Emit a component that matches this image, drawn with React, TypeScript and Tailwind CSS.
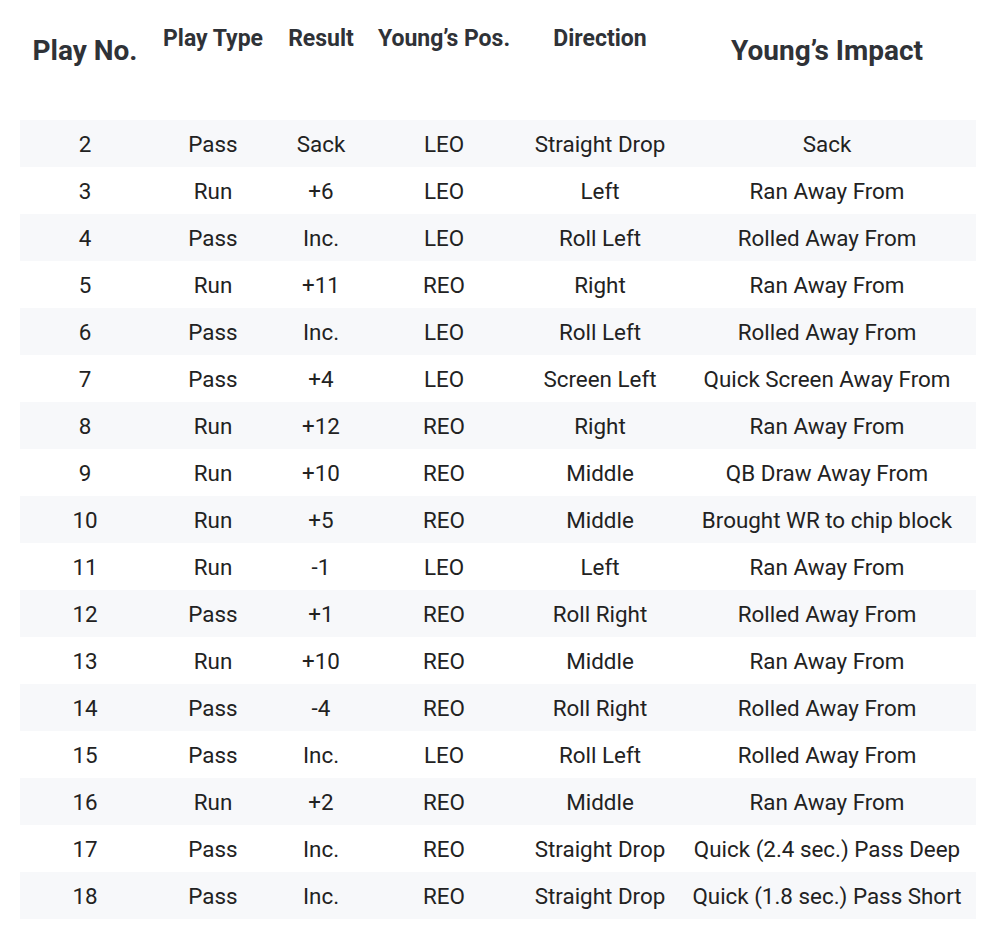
const plays = [
  ["2", "Pass", "Sack", "LEO", "Straight Drop", "Sack"],
  ["3", "Run", "+6", "LEO", "Left", "Ran Away From"],
  ["4", "Pass", "Inc.", "LEO", "Roll Left", "Rolled Away From"],
  ["5", "Run", "+11", "REO", "Right", "Ran Away From"],
  ["6", "Pass", "Inc.", "LEO", "Roll Left", "Rolled Away From"],
  ["7", "Pass", "+4", "LEO", "Screen Left", "Quick Screen Away From"],
  ["8", "Run", "+12", "REO", "Right", "Ran Away From"],
  ["9", "Run", "+10", "REO", "Middle", "QB Draw Away From"],
  ["10", "Run", "+5", "REO", "Middle", "Brought WR to chip block"],
  ["11", "Run", "-1", "LEO", "Left", "Ran Away From"],
  ["12", "Pass", "+1", "REO", "Roll Right", "Rolled Away From"],
  ["13", "Run", "+10", "REO", "Middle", "Ran Away From"],
  ["14", "Pass", "-4", "REO", "Roll Right", "Rolled Away From"],
  ["15", "Pass", "Inc.", "LEO", "Roll Left", "Rolled Away From"],
  ["16", "Run", "+2", "REO", "Middle", "Ran Away From"],
  ["17", "Pass", "Inc.", "REO", "Straight Drop", "Quick (2.4 sec.) Pass Deep"],
  ["18", "Pass", "Inc.", "REO", "Straight Drop", "Quick (1.8 sec.) Pass Short"],
];

const cols = ["w-[130px]", "w-[126px]", "w-[90px]", "w-[156px]", "w-[156px]", "w-[298px]"];

export default function App() {
  return (
    <div className="w-[1000px] h-[942px] bg-white px-5 font-['Roboto',sans-serif]">
      <div className="w-[956px]">
        <div className="flex h-[120px] font-bold text-[#2f3237]">
          <div className={`${cols[0]} pt-[30px] text-center text-[28px]`}>Play No.</div>
          <div className={`${cols[1]} pt-[22px] text-center text-[23px]`}>Play Type</div>
          <div className={`${cols[2]} pt-[22px] text-center text-[23px]`}>Result</div>
          <div className={`${cols[3]} pt-[22px] text-center text-[23px]`}>Young’s Pos.</div>
          <div className={`${cols[4]} pt-[22px] text-center text-[23px]`}>Direction</div>
          <div className={`${cols[5]} pt-[30px] text-center text-[28px]`}>Young’s Impact</div>
        </div>
        {plays.map((row, i) => (
          <div
            key={row[0]}
            className={`flex h-[47px] items-center pt-[3px] text-[22.4px] text-[#222222] ${i % 2 === 0 ? "bg-[#f7f8fa]" : ""}`}
          >
            {row.map((cell, j) => (
              <div key={j} className={`${cols[j]} text-center whitespace-nowrap`}>
                {cell}
              </div>
            ))}
          </div>
        ))}
      </div>
    </div>
  );
}
